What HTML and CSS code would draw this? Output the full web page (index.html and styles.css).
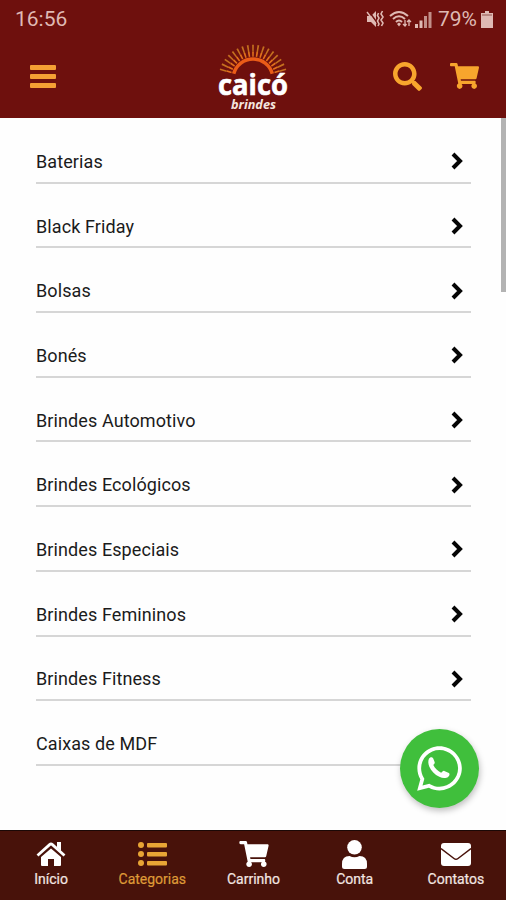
FILE: index.html
```html
<!DOCTYPE html>
<html lang="pt-BR">
  <head>
    <meta charset="UTF-8" />
    <meta name="viewport" content="width=device-width, initial-scale=1.0" />
    <title>Caicó Brindes</title>
    <link rel="stylesheet" href="styles.css">
  </head>
  <body>
    <header class="header">
      <div class="status">
        <span class="clock">16:56</span>
        <div class="status-icons">
          <svg class="mute" viewBox="0 0 18 18">
            <path d="M1 6h4l5-5v16l-5-5H1z" fill="currentColor" />
            <path d="M2 0l10 14" stroke="#6e100d" stroke-width="1.5" />
            <path d="M1 2l9 12" fill="none" stroke="currentColor" stroke-width="1.4" />
            <path d="M12.5 3l-1 2.5 1.5 2.5-1.5 3 1.5 3-1 2M16.5 1l-1.5 3 2 3-2 3 2 3-1.5 3" fill="none" stroke="currentColor" stroke-width="1.6" />
          </svg>
          <svg class="wifi" viewBox="0 0 23 18">
            <path d="M1 6Q10-2 19 6M4 9Q10 3.5 16 9M7 12Q10 9 13 12" fill="none" stroke="currentColor" stroke-width="2" />
            <path d="M8 14l2-1.5 2 1.5-2 2.5z" fill="currentColor" />
            <path d="M16 10v6m-2-2l2 2 1.5-2M20 16v-6m-2 2l2-2 2 2" fill="none" stroke="currentColor" stroke-width="1.3" />
          </svg>
          <svg class="signal" viewBox="0 0 17 17">
            <path d="M0 13h3v4H0zM4.5 9.5h3V17h-3z" fill="currentColor" />
            <path d="M9 5h3v12H9zM13.5 1h3v16h-3z" fill="currentColor" opacity=".75" />
          </svg>
          <span class="battery-text">79%</span>
          <svg class="battery" viewBox="0 0 12 17">
            <path d="M4 0h4v2h4v15H0V2h4z" fill="currentColor" />
            <path d="M1 3h10v2H1z" fill="#b98680" />
          </svg>
        </div>
      </div>
      <div class="navbar">
        <a class="menu" aria-label="Menu"><span></span><span></span><span></span></a>
        <svg class="logo" viewBox="0 0 76 76">
          <g fill="none">
            <path class="rays-outer" d="M8.1 30A31 31 0 0 1 67.9 30" pathLength="200" />
            <path class="rays-middle" d="M13.9 31.5A25 25 0 0 1 62.1 31.5" pathLength="200" />
            <path class="sun-edge" d="M18.7 32.8A20 20 0 0 1 57.3 32.8" />
          </g>
          <text class="logo-name" x="3" y="54" textLength="70" lengthAdjust="spacingAndGlyphs">caicó</text>
          <text class="logo-sub" x="16" y="67.5" textLength="45" lengthAdjust="spacingAndGlyphs">brindes</text>
        </svg>
        <div class="actions">
          <svg class="search" viewBox="0 0 512 512">
            <path d="M505 442.7L405.3 343c-4.5-4.5-10.6-7-17-7H372c27.6-35.3 44-79.7 44-128C416 93.1 322.9 0 208 0S0 93.1 0 208s93.1 208 208 208c48.3 0 92.7-16.4 128-44v16.3c0 6.4 2.5 12.5 7 17l99.7 99.7c9.4 9.4 24.6 9.4 33.9 0l28.3-28.3c9.4-9.4 9.4-24.6.1-34zM208 336c-70.7 0-128-57.2-128-128 0-70.7 57.2-128 128-128 70.7 0 128 57.2 128 128 0 70.7-57.2 128-128 128z" />
          </svg>
          <svg class="cart" viewBox="0 0 576 512">
            <path id="cart" d="M528.12 301.319l47.273-208C578.806 78.301 567.391 64 551.99 64H159.208l-9.166-44.81C147.758 8.021 137.93 0 126.529 0H24C10.745 0 0 10.745 0 24v16c0 13.255 10.745 24 24 24h69.883l70.248 343.435C147.325 417.1 136 435.222 136 456c0 30.928 25.072 56 56 56s56-25.072 56-56c0-15.674-6.447-29.835-16.824-40h209.647C430.447 426.165 424 440.326 424 456c0 30.928 25.072 56 56 56s56-25.072 56-56c0-22.172-12.888-41.332-31.579-50.405l5.517-24.276c3.413-15.018-8.002-29.319-23.403-29.319H218.117l-6.545-32h293.145c11.206 0 20.92-7.754 23.403-18.681z" />
          </svg>
        </div>
      </div>
    </header>

    <main class="content">
      <ul class="categories">
        <li>Baterias <svg class="chevron" viewBox="0 0 12 18"><path d="M2 2l7 7-7 7" /></svg></li>
        <li>Black Friday <svg class="chevron" viewBox="0 0 12 18"><path d="M2 2l7 7-7 7" /></svg></li>
        <li>Bolsas <svg class="chevron" viewBox="0 0 12 18"><path d="M2 2l7 7-7 7" /></svg></li>
        <li>Bonés <svg class="chevron" viewBox="0 0 12 18"><path d="M2 2l7 7-7 7" /></svg></li>
        <li>Brindes Automotivo <svg class="chevron" viewBox="0 0 12 18"><path d="M2 2l7 7-7 7" /></svg></li>
        <li>Brindes Ecológicos <svg class="chevron" viewBox="0 0 12 18"><path d="M2 2l7 7-7 7" /></svg></li>
        <li>Brindes Especiais <svg class="chevron" viewBox="0 0 12 18"><path d="M2 2l7 7-7 7" /></svg></li>
        <li>Brindes Femininos <svg class="chevron" viewBox="0 0 12 18"><path d="M2 2l7 7-7 7" /></svg></li>
        <li>Brindes Fitness <svg class="chevron" viewBox="0 0 12 18"><path d="M2 2l7 7-7 7" /></svg></li>
        <li>Caixas de MDF</li>
      </ul>
      <div class="scrollbar"></div>
    </main>

    <a class="whatsapp" aria-label="WhatsApp">
      <svg viewBox="0 0 448 512">
        <path d="M380.9 97.1C339 55.1 283.2 32 223.9 32c-122.4 0-222 99.6-222 222 0 39.1 10.2 77.3 29.6 111L0 480l117.7-30.9c32.4 17.7 68.9 27 106.1 27h.1c122.3 0 224.1-99.6 224.1-222 0-59.3-25.2-115-67.1-157zm-157 341.6c-33.2 0-65.7-8.9-94-25.7l-6.7-4-69.8 18.3L72 359.2l-4.4-7c-18.5-29.4-28.2-63.3-28.2-98.2 0-101.7 82.8-184.5 184.6-184.5 49.3 0 95.6 19.2 130.4 54.1 34.8 34.9 56.2 81.2 56.1 130.5 0 101.8-84.9 184.6-186.6 184.6z" />
        <path d="M118 158c8-18 34-22 42-4l16 38c4 12-12 22-14 30 16 34 46 62 78 76 10-2 20-22 32-18l46 20c14 8 4 30-6 38-22 20-56 18-90 2-46-22-82-62-100-102-12-28-14-58-4-80z" />
      </svg>
    </a>

    <nav class="tabbar">
      <a class="tab">
        <svg class="icon-home" viewBox="0 0 30 25">
          <path d="M15 7.5L25 16v8q0 1-1 1h-6v-7h-6v7H6q-1 0-1-1v-8z" />
          <path d="M1.5 14.5L13.6 3.6q1.4-1.2 2.8 0l12.1 10.9" fill="none" stroke="#fff" stroke-width="2.8" />
          <path d="M21 1h4v9l-4-3.5z" />
        </svg>
        <span>Início</span>
      </a>
      <a class="tab active">
        <svg class="icon-list" viewBox="0 0 29 24">
          <circle cx="3" cy="3" r="3" /><circle cx="3" cy="12" r="3" /><circle cx="3" cy="21" r="3" />
          <rect x="9" y="1" width="20" height="4.5" rx="1" /><rect x="9" y="10" width="20" height="4.5" rx="1" /><rect x="9" y="19" width="20" height="4.5" rx="1" />
        </svg>
        <span>Categorias</span>
      </a>
      <a class="tab">
        <svg class="icon-cart" viewBox="0 0 576 512"><use href="#cart" /></svg>
        <span>Carrinho</span>
      </a>
      <a class="tab">
        <svg class="icon-user" viewBox="0 0 25 29">
          <circle cx="12.5" cy="7.3" r="7.3" />
          <path d="M7.5 16q5 2.4 10 0Q25 16 25 24v2.500q0 2.500-2.500 2.500h-20Q0 29 0 26.500V24q0-8 7.500-8z" />
        </svg>
        <span>Conta</span>
      </a>
      <a class="tab">
        <svg class="icon-mail" viewBox="0 0 30 23">
          <rect width="30" height="23" rx="3" />
          <path d="M0 5.5l13 10q2 1.500 4 0l13-10" fill="none" stroke="#48120a" stroke-width="1.5" />
        </svg>
        <span>Contatos</span>
      </a>
    </nav>
  </body>
</html>
```

FILE: styles.css
```css
* {
  box-sizing: border-box;
}

body {
  margin: 0;
  height: 900px;
  display: flex;
  flex-direction: column;
  overflow: hidden;
  background: #fefefe;
  font-family: Roboto, "Liberation Sans", sans-serif;
}

svg {
  display: block;
  flex: none;
}

.header {
  height: 118px;
  background: #6e100d;
  flex: none;
}

.status {
  height: 38px;
  padding: 0 13px 0 15px;
  display: flex;
  align-items: center;
  justify-content: space-between;
  color: #dfb9b3;
  font-size: 21px;
}

.status-icons {
  display: flex;
  align-items: center;
}

.mute {
  width: 18px;
  height: 18px;
  margin-right: 5px;
}

.wifi {
  width: 23px;
  height: 18px;
  margin-right: 3px;
}

.signal {
  width: 17px;
  height: 17px;
  margin-right: 6px;
}

.battery {
  width: 12px;
  height: 17px;
  margin-left: 4px;
}

.navbar {
  height: 80px;
  padding: 0 28px 0 28px;
  display: grid;
  grid-template-columns: 1fr 76px 1fr;
}

.menu {
  width: 26px;
  margin-left: 2px;
  padding-top: 27px;
  display: flex;
  flex-direction: column;
  gap: 4px;
}

.menu span {
  height: 5px;
  border-radius: 1px;
  background: #f4a034;
}

.logo {
  width: 76px;
  height: 76px;
  margin-top: 3px;
  overflow: visible;
}

.rays-outer {
  stroke: #c4701f;
  stroke-width: 7;
  stroke-dasharray: 4 8.25;
}

.rays-middle {
  stroke: #e2701c;
  stroke-width: 5;
  stroke-dasharray: 5 7.187;
}

.sun-edge {
  stroke: #ea5c18;
  stroke-width: 3.5;
}

.logo-name {
  fill: #fff;
  stroke: #fff;
  stroke-width: 0.6;
  font: bold 28px "Open Sans", sans-serif;
}

.logo-sub {
  fill: #f5e5df;
  font: italic bold 12.5px "Noto Sans", sans-serif;
}

.actions {
  display: flex;
  justify-content: flex-end;
  gap: 28px;
  padding-top: 24px;
  fill: #f8a52d;
}

.search {
  width: 29px;
  height: 29px;
}

.cart {
  width: 29px;
  height: 26px;
  margin-top: 1px;
  margin-right: -1px;
}

.content {
  flex: 1;
  display: flex;
  justify-content: space-between;
}

.categories {
  list-style: none;
  margin: 0 0 0 36px;
  padding: 1px 0 0;
  width: 435px;
}

.categories li {
  height: 64.7px;
  padding: 22px 8px 0 0;
  display: flex;
  align-items: center;
  justify-content: space-between;
  border-bottom: 2px solid #d6d6d6;
  color: #1b1b1b;
  font-size: 18px;
  letter-spacing: 0.1px;
}

.chevron {
  width: 12px;
  height: 18px;
  fill: none;
  stroke: #050505;
  stroke-width: 4;
}

.scrollbar {
  width: 5px;
  height: 174px;
  background: #b3b3b3;
}

.whatsapp {
  position: fixed;
  right: 27px;
  bottom: 92px;
  width: 79px;
  height: 79px;
  border-radius: 50%;
  background: #40bf3c;
  box-shadow: 1px 3px 6px rgba(0, 0, 0, 0.25);
  display: flex;
  align-items: center;
  justify-content: center;
}

.whatsapp svg {
  width: 45px;
  height: 51px;
  fill: #fff;
}

.tabbar {
  height: 70px;
  flex: none;
  display: flex;
  background: #48120a;
  border-top: 1px solid #1b0806;
}

.tab {
  flex: 1;
  display: grid;
  grid-template-rows: 38px 18px;
  align-content: start;
  justify-items: center;
  align-items: end;
  color: #f3e6e2;
  fill: #fff;
  font-size: 14px;
  padding-left: 1px;
}

.tab svg {
  margin-bottom: 3px;
}

.tab span {
  -webkit-text-stroke: 0.2px;
}

.tab.active {
  color: #df9a37;
  fill: #e8a535;
}

.icon-home {
  width: 30px;
  height: 25px;
}

.icon-list {
  width: 29px;
  height: 24px;
}

.tab .icon-cart {
  width: 30px;
  height: 26px;
  margin-bottom: 2px;
}

.tab .icon-user {
  width: 25px;
  height: 29px;
  margin-bottom: 0;
}

.icon-mail {
  width: 30px;
  height: 23px;
}
```
